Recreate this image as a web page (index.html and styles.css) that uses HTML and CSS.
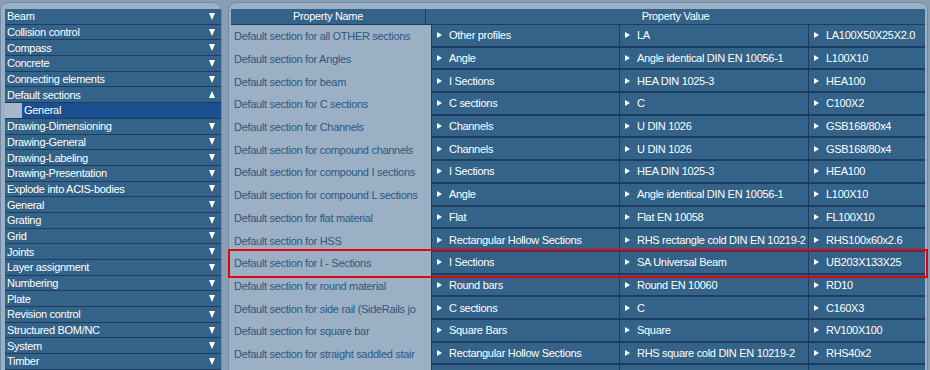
FILE: index.html
```html
<!DOCTYPE html>
<html lang="en">
  <head>
    <meta charset="UTF-8" />
    <link rel="stylesheet" href="styles.css">
    <title>Options</title>
  </head>
  <body>
    <div class="screen">
      <div class="tree">
        <div class="tree-item">Beam<span class="arrow"></span></div>
        <div class="tree-item">Collision control<span class="arrow"></span></div>
        <div class="tree-item">Compass<span class="arrow"></span></div>
        <div class="tree-item">Concrete<span class="arrow"></span></div>
        <div class="tree-item">Connecting elements<span class="arrow"></span></div>
        <div class="tree-item">Default sections<span class="arrow up"></span></div>
        <div class="tree-sub"><span class="tree-box"></span><span class="tree-sel">General</span></div>
        <div class="tree-item">Drawing-Dimensioning<span class="arrow"></span></div>
        <div class="tree-item">Drawing-General<span class="arrow"></span></div>
        <div class="tree-item">Drawing-Labeling<span class="arrow"></span></div>
        <div class="tree-item">Drawing-Presentation<span class="arrow"></span></div>
        <div class="tree-item">Explode into ACIS-bodies<span class="arrow"></span></div>
        <div class="tree-item">General<span class="arrow"></span></div>
        <div class="tree-item">Grating<span class="arrow"></span></div>
        <div class="tree-item">Grid<span class="arrow"></span></div>
        <div class="tree-item">Joints<span class="arrow"></span></div>
        <div class="tree-item">Layer assignment<span class="arrow"></span></div>
        <div class="tree-item">Numbering<span class="arrow"></span></div>
        <div class="tree-item">Plate<span class="arrow"></span></div>
        <div class="tree-item">Revision control<span class="arrow"></span></div>
        <div class="tree-item">Structured BOM/NC<span class="arrow"></span></div>
        <div class="tree-item">System<span class="arrow"></span></div>
        <div class="tree-item">Timber<span class="arrow"></span></div>
      </div>

      <div class="props">
        <div class="head">
          <div class="head-name">Property Name</div>
          <div class="head-value">Property Value</div>
        </div>
        <div id="rows"></div>
      </div>
    </div>

    <script>
      const rows = [
        ['Default section for all OTHER sections', 'Other profiles', 'LA', 'LA100X50X25X2.0'],
        ['Default section for Angles', 'Angle', 'Angle identical DIN EN 10056-1', 'L100X10'],
        ['Default section for beam', 'I Sections', 'HEA DIN 1025-3', 'HEA100'],
        ['Default section for C sections', 'C sections', 'C', 'C100X2'],
        ['Default section for Channels', 'Channels', 'U DIN 1026', 'GSB168/80x4'],
        ['Default section for compound channels', 'Channels', 'U DIN 1026', 'GSB168/80x4'],
        ['Default section for compound I sections', 'I Sections', 'HEA DIN 1025-3', 'HEA100'],
        ['Default section for compound L sections', 'Angle', 'Angle identical DIN EN 10056-1', 'L100X10'],
        ['Default section for flat material', 'Flat', 'Flat EN 10058', 'FL100X10'],
        ['Default section for HSS', 'Rectangular Hollow Sections', 'RHS rectangle cold DIN EN 10219-2', 'RHS100x60x2.6'],
        ['Default section for I - Sections', 'I Sections', 'SA Universal Beam', 'UB203X133X25'],
        ['Default section for round material', 'Round bars', 'Round EN 10060', 'RD10'],
        ['Default section for side rail (SideRails jo', 'C sections', 'C', 'C160X3'],
        ['Default section for square bar', 'Square Bars', 'Square', 'RV100X100'],
        ['Default section for straight saddled stair', 'Rectangular Hollow Sections', 'RHS square cold DIN EN 10219-2', 'RHS40x2'],
        ['', '', '', '']
      ]

      const list = document.getElementById('rows')
      for (let i = 0; i < rows.length; ++i) {
        let row = document.createElement('div')
        row.className = i == 10 ? 'row selected' : 'row'

        let name = document.createElement('div')
        name.className = 'name'
        name.textContent = rows[i][0]
        row.appendChild(name)

        for (let j = 1; j < 4; ++j) {
          let cell = document.createElement('div')
          cell.className = 'cell'
          if (rows[i][j] != '') {
            let mark = document.createElement('span')
            mark.className = 'mark'
            cell.appendChild(mark)
          }
          cell.appendChild(document.createTextNode(rows[i][j]))
          row.appendChild(cell)
        }
        list.appendChild(row)
      }
    </script>
  </body>
</html>
```

FILE: styles.css
```css
* {
  margin: 0;
  padding: 0;
  box-sizing: border-box;
}
body {
  background-color: #8a9eb3;
  font-family: "Liberation Sans", Arial, sans-serif;
  font-size: 11px;
  letter-spacing: -0.3px;
  overflow: hidden;
}
.screen {
  display: flex;
  gap: 6px;
  height: 370px;
  background-color: #8a9eb3;
  padding-top: 2px;
}

/* left tree */
.tree {
  width: 222px;
  flex-shrink: 0;
  height: 380px;
  background-color: #9cb0c5;
  border: 1px solid #6f8aa6;
  border-radius: 8px 8px 0 0;
  padding: 6px 0 0 4px;
}
.tree-item,
.tree-sub {
  height: 15.7px;
  display: flex;
  align-items: center;
  border-bottom: 1px solid #1d3d60;
  color: white;
}
.tree-item {
  justify-content: space-between;
  background-color: #346389;
  padding: 0 6px 0 2px;
}
.tree-box {
  width: 17px;
  height: 100%;
  background-color: #a6b7cb;
}
.tree-sel {
  flex: 1;
  height: 100%;
  display: flex;
  align-items: center;
  padding-left: 2px;
  background-color: #1c4f90;
}
.arrow {
  width: 0;
  height: 0;
  border-left: 3.5px solid transparent;
  border-right: 3.5px solid transparent;
  border-top: 7px solid white;
}
.arrow.up {
  border-top: none;
  border-bottom: 7px solid white;
}

/* property table */
.props {
  flex: 1;
  height: 380px;
  margin-right: 2px;
  background-color: #9cb0c5;
  border: 1px solid #6f8aa6;
  border-radius: 8px 8px 0 0;
  padding: 6px 2px 0 2px;
}
.head {
  display: flex;
  height: 16px;
  background-color: #346389;
  color: white;
  border-bottom: 1px solid #1d3d60;
}
.head-name {
  width: 195px;
  text-align: center;
  border-right: 1px solid #1d3d60;
  line-height: 15px;
}
.head-value {
  flex: 1;
  text-align: center;
  line-height: 15px;
}
.row {
  display: grid;
  grid-template-columns: 200px 188px 189px 1fr;
  height: 22.7px;
}
.name {
  color: #2c587d;
  padding: 0 5px 0 3px;
  display: flex;
  align-items: center;
  white-space: nowrap;
  overflow: hidden;
}
.cell {
  background-color: #346389;
  color: white;
  display: flex;
  align-items: center;
  border-left: 1px solid #1d3d60;
  border-bottom: 2px solid #1d3d60;
  padding-left: 5px;
  white-space: nowrap;
  overflow: hidden;
}
.mark {
  flex-shrink: 0;
  width: 0;
  height: 0;
  border-top: 3px solid transparent;
  border-bottom: 3px solid transparent;
  border-left: 5px solid white;
  margin-right: 7px;
}
.selected {
  outline: 2px solid #e5000d;
  outline-offset: 1px;
}
```
